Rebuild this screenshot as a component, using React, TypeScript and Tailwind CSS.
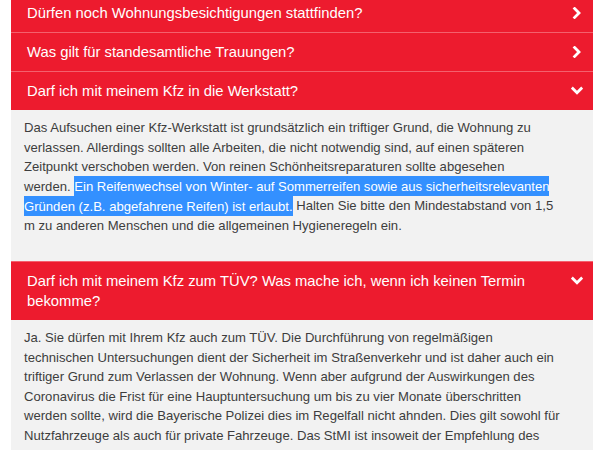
import React from 'react'

const font = { fontFamily: '"Liberation Sans", Arial, sans-serif' }

function Chevron({ open }: { open: boolean }) {
  return (
    <svg width="12" height="12" viewBox="0 0 12 12" className="mt-1 shrink-0">
      {open ? (
        <polyline points="1.8,3.6 6,7.8 10.2,3.6" fill="none" stroke="white" strokeWidth="2.8" strokeLinecap="square" />
      ) : (
        <polyline points="3.6,1.6 8,6 3.6,10.4" fill="none" stroke="white" strokeWidth="2.8" strokeLinecap="square" />
      )}
    </svg>
  )
}

function Header({ title, open, first }: { title: string; open?: boolean; first?: boolean }) {
  return (
    <div
      className={
        'flex items-start justify-between bg-[#ed1b2e] pl-4 pr-[10px] py-[9px] text-white text-[14.8px] leading-[20px] ' +
        (first ? '' : 'border-t border-[#f4606d]')
      }
    >
      <span className="pr-10">{title}</span>
      <Chevron open={!!open} />
    </div>
  )
}

function Answer({ lines }: { lines: React.ReactNode[] }) {
  return (
    <div className="bg-[#f2f2f2] pl-[13px] pr-4 pt-[8px] pb-[26px] text-[13.1px] leading-[19.5px] text-[#3d3d3d] whitespace-nowrap">
      {lines.map((l, i) => (
        <div key={i}>{l}</div>
      ))}
    </div>
  )
}

const sel = 'bg-[#3390ff] text-white py-[2.5px]'

export default function App() {
  return (
    <div className="h-[450px] overflow-hidden bg-white" style={font}>
      <div className="mx-[11px] -mt-[6px] w-[582px]">
        <Header first title="Dürfen noch Wohnungsbesichtigungen stattfinden?" />
        <Header title="Was gilt für standesamtliche Trauungen?" />
        <Header open title="Darf ich mit meinem Kfz in die Werkstatt?" />
        <Answer
          lines={[
            'Das Aufsuchen einer Kfz-Werkstatt ist grundsätzlich ein triftiger Grund, die Wohnung zu',
            'verlassen. Allerdings sollten alle Arbeiten, die nicht notwendig sind, auf einen späteren',
            'Zeitpunkt verschoben werden. Von reinen Schönheitsreparaturen sollte abgesehen',
            <>
              werden. <span className={sel}>Ein Reifenwechsel von Winter- auf Sommerreifen sowie aus sicherheitsrelevanten</span>
            </>,
            <>
              <span className={sel}>Gründen (z.B. abgefahrene Reifen) ist erlaubt.</span> Halten Sie bitte den Mindestabstand von 1,5
            </>,
            'm zu anderen Menschen und die allgemeinen Hygieneregeln ein.',
          ]}
        />
        <Header open title="Darf ich mit meinem Kfz zum TÜV? Was mache ich, wenn ich keinen Termin bekomme?" />
        <Answer
          lines={[
            'Ja. Sie dürfen mit Ihrem Kfz auch zum TÜV. Die Durchführung von regelmäßigen',
            'technischen Untersuchungen dient der Sicherheit im Straßenverkehr und ist daher auch ein',
            'triftiger Grund zum Verlassen der Wohnung. Wenn aber aufgrund der Auswirkungen des',
            'Coronavirus die Frist für eine Hauptuntersuchung um bis zu vier Monate überschritten',
            'werden sollte, wird die Bayerische Polizei dies im Regelfall nicht ahnden. Dies gilt sowohl für',
            'Nutzfahrzeuge als auch für private Fahrzeuge. Das StMI ist insoweit der Empfehlung des',
            'Bundesverkehrsministeriums gefolgt.',
          ]}
        />
      </div>
    </div>
  )
}
